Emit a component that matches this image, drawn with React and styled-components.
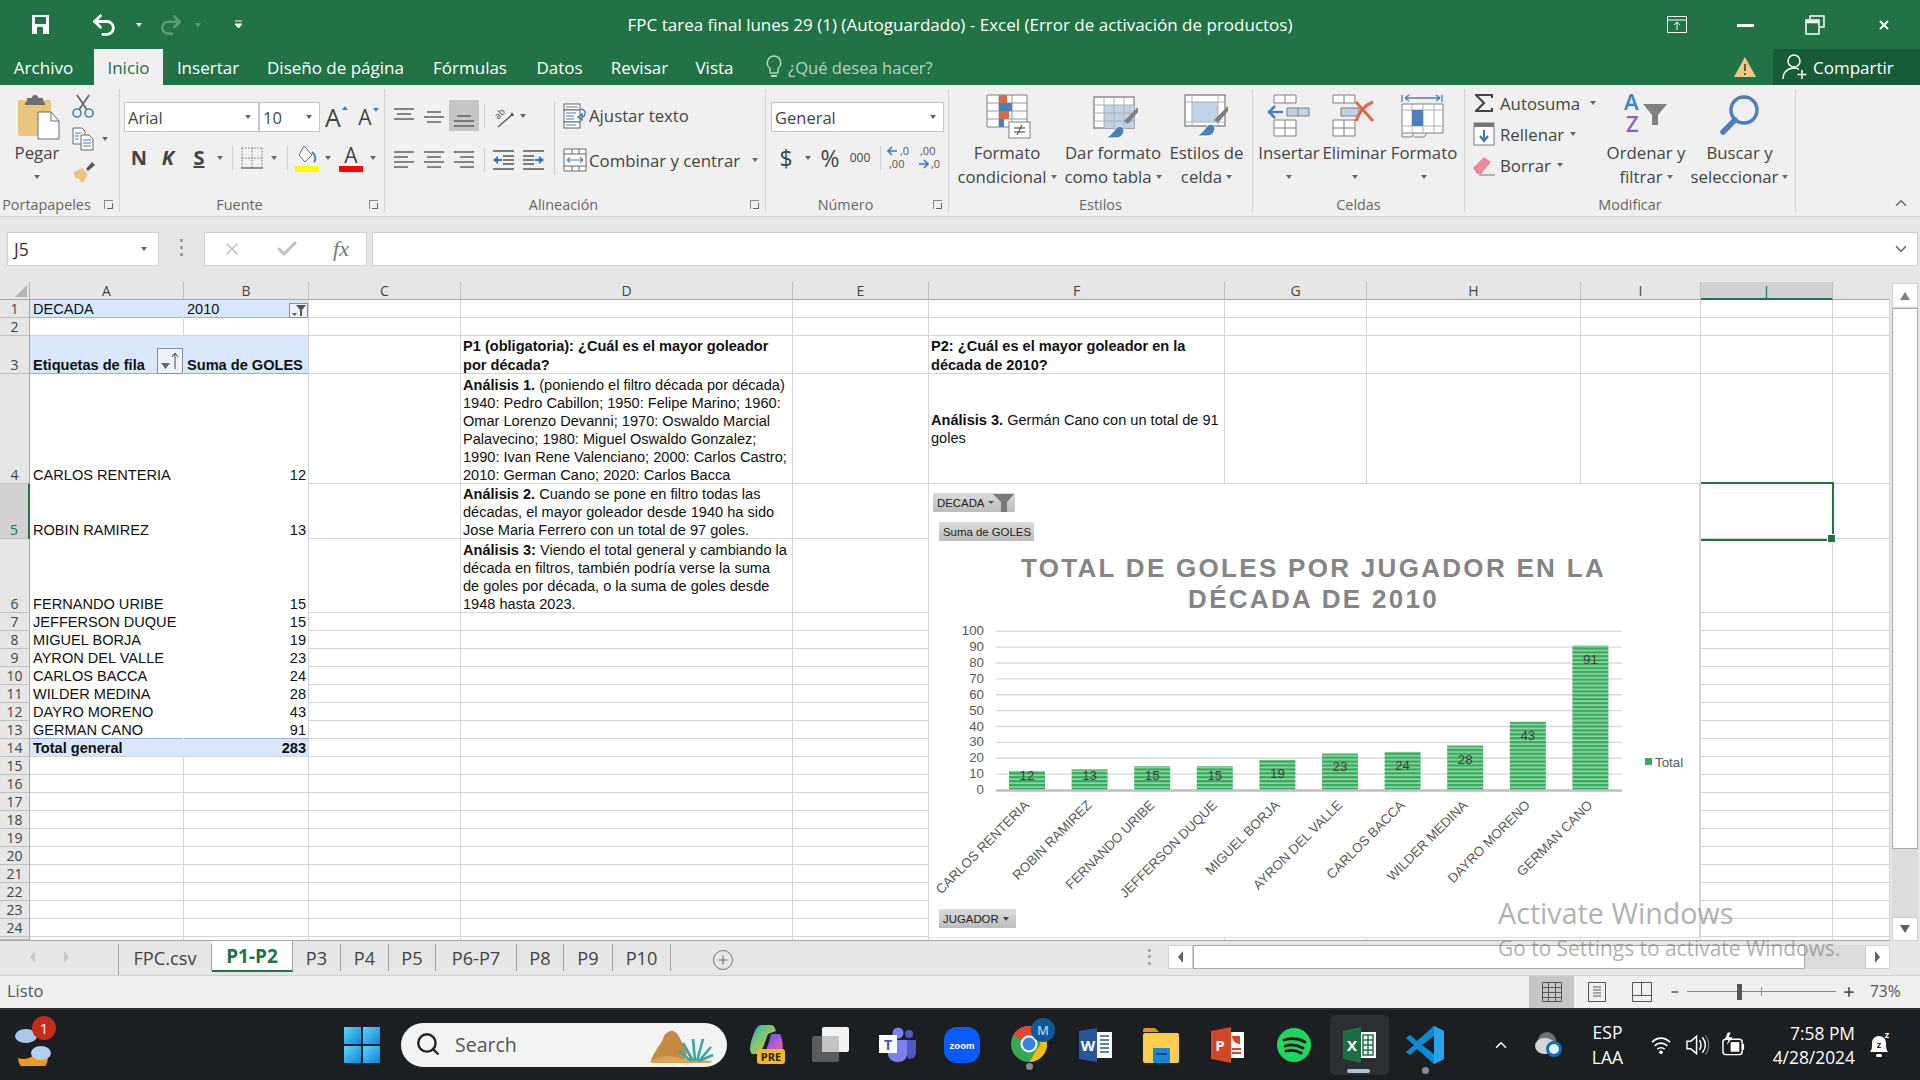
import React from 'react'
import styled, { createGlobalStyle } from 'styled-components'
import { Undo2, Redo2, Search, ChevronUp, ChevronDown, X, Check, Plus, Minus } from 'lucide-react'

const UI = `"Open Sans", "Noto Sans", sans-serif`
const ARIAL = `"Liberation Sans", Arial, sans-serif`
const GREEN = '#217346'

const GlobalStyle = createGlobalStyle`
  html, body { margin: 0; padding: 0; background: #fff; }
  * { box-sizing: border-box; }
  body { font-family: ${UI}; }
`

const Window = styled.div`
  width: 1920px;
  height: 1080px;
  position: relative;
  overflow: hidden;
  display: flex;
  flex-direction: column;
  background: #e6e6e6;
`

const Slot = styled.span`
  display: inline-flex;
  align-items: center;
  justify-content: center;
  flex: none;
  width: ${p => p.$w}px;
  margin-left: ${p => p.$ml || 0}px;
  position: relative;
`

/* title bar */
const TitleBar = styled.div`
  height: 49px;
  background: ${GREEN};
  display: grid;
  grid-template-columns: 1fr auto 1fr;
  align-items: center;
  color: #fff;
`
const Quick = styled.div`
  display: flex;
  align-items: center;
`
const WindowTitle = styled.div`
  font-size: 17px;
  color: #fff;
  white-space: nowrap;
`
const WindowButtons = styled.div`
  display: flex;
  align-items: center;
  justify-content: flex-end;
`
const TinyCaret = styled.span`
  display: inline-block;
  flex: none;
  width: 0;
  height: 0;
  border-left: ${p => p.$s || 3.5}px solid transparent;
  border-right: ${p => p.$s || 3.5}px solid transparent;
  border-top: ${p => (p.$s || 3.5) + 0.5}px solid ${p => p.$c || '#666'};
  margin-left: ${p => p.$ml || 0}px;
`

/* menu */
const MenuBar = styled.div`
  height: 36px;
  background: ${GREEN};
  display: flex;
  align-items: stretch;
`
const MenuTab = styled.div`
  width: ${p => p.$w}px;
  margin-left: ${p => p.$ml || 0}px;
  display: flex;
  align-items: center;
  justify-content: center;
  font-size: 17px;
  white-space: nowrap;
  color: ${p => (p.$active ? GREEN : '#fff')};
  background: ${p => (p.$active ? '#f0f0f0' : 'transparent')};
`
const TellMe = styled.div`
  display: flex;
  align-items: center;
  font-size: 16.6px;
  color: #b6d5c2;
  margin-left: 6px;
  white-space: nowrap;
`
const WarningSlot = styled.span`
  margin-left: auto;
  margin-right: 16px;
  display: flex;
  align-items: center;
`
const Share = styled.div`
  width: 147px;
  background: #185c37;
  color: #fff;
  font-size: 17px;
  display: flex;
  align-items: center;
  padding-left: 7px;
  gap: 3px;
`

/* ribbon */
const Ribbon = styled.div`
  height: 132px;
  background: #f0f0f0;
  border-bottom: 1px solid #d2d2d2;
  display: flex;
  padding: 4px 0 4px;
  color: #444;
  font-size: 16.8px;
`
const Group = styled.div`
  width: ${p => p.$w}px;
  flex: none;
  border-right: 1px solid #d4d4d4;
  display: flex;
  flex-direction: column;
`
const GroupBody = styled.div`
  flex: 1;
  min-height: 0;
  display: flex;
  padding-left: ${p => p.$pl || 0}px;
`
const GroupLabel = styled.div`
  height: 20px;
  line-height: 26px;
  font-size: 14.4px;
  color: #666;
  text-align: center;
  white-space: nowrap;
  position: relative;
  padding-right: ${p => p.$pr || 0}px;
`
const Launcher = styled.span`
  position: absolute;
  right: 6px;
  top: 8px;
  width: 9px;
  height: 9px;
  border-left: 1px solid #888;
  border-top: 1px solid #888;
  &::after {
    content: '';
    position: absolute;
    right: 0;
    bottom: 0;
    width: 5px;
    height: 5px;
    border-right: 1px solid #666;
    border-bottom: 1px solid #666;
  }
`
const LargeButton = styled.div`
  width: ${p => p.$w}px;
  margin-left: ${p => p.$ml || 0}px;
  flex: none;
  display: flex;
  flex-direction: column;
  align-items: center;
  padding-top: 5px;
`
const LargeIcon = styled.div`
  height: 47px;
  display: flex;
  align-items: flex-start;
  justify-content: center;
  margin-left: ${p => p.$ml || 0}px;
`
const LargeLine = styled.div`
  height: 24px;
  line-height: 24px;
  white-space: nowrap;
  display: flex;
  align-items: center;
  gap: 4px;
`
const ToolColumn = styled.div`
  display: flex;
  flex-direction: column;
  width: ${p => (p.$w ? p.$w + 'px' : 'auto')};
`
const ToolRow = styled.div`
  display: flex;
  align-items: center;
  height: ${p => p.$h || 30}px;
  margin-top: ${p => p.$mt || 0}px;
  padding-left: ${p => p.$pl || 0}px;
  white-space: nowrap;
`
const ComboBox = styled.div`
  width: ${p => p.$w}px;
  height: 30px;
  background: #fff;
  border: 1px solid #c6c6c6;
  display: flex;
  align-items: center;
  justify-content: space-between;
  padding: 0 7px 0 3px;
  font-size: 16.5px;
  margin-left: ${p => p.$ml || 0}px;
`
const Sep = styled.span`
  width: 1px;
  height: ${p => p.$h || 26}px;
  background: #cfcfcf;
  display: block;
`
const TallSep = styled.span`
  flex: none;
  width: 1px;
  height: 73px;
  margin: 13px 4px 0 5px;
  background: #cfcfcf;
`
const PressedCell = styled.span`
  width: 30px;
  height: 31px;
  flex: none;
  background: #c6c6c6;
  display: flex;
  align-items: flex-end;
  justify-content: center;
  padding-bottom: 3px;
`
const FontLetter = styled.span`
  font-size: ${p => p.$s}px;
  line-height: 1;
  color: #444;
  font-weight: ${p => (p.$b ? 700 : 400)};
  font-style: ${p => (p.$i ? 'italic' : 'normal')};
  text-decoration: ${p => (p.$u ? 'underline' : 'none')};
  position: relative;
`
const GrowMark = styled.span`
  position: absolute;
  right: -7px;
  top: 1px;
  width: 0;
  height: 0;
  border-left: 3.5px solid transparent;
  border-right: 3.5px solid transparent;
  ${p => (p.$down ? 'border-top: 4px solid #4a7fb5;' : 'border-bottom: 4px solid #4a7fb5;')}
`
const ColourLetter = styled.span`
  font-size: 21px;
  line-height: 21px;
  display: flex;
  flex-direction: column;
  align-items: center;
  width: 24px;
  color: #444;
  &::after {
    content: '';
    width: 24px;
    height: 6px;
    background: #f00;
  }
`
const SmallLabel = styled.span`
  margin-left: ${p => p.$ml || 0}px;
`
const CollapseSlot = styled.div`
  flex: 1;
  display: flex;
  align-items: flex-end;
  justify-content: flex-end;
  padding: 0 10px 0 0;
  color: #666;
`

/* formula bar */
const FormulaBar = styled.div`
  height: 65px;
  background: #e6e6e6;
  display: flex;
  align-items: flex-start;
  padding-top: 15px;
`
const NameBox = styled.div`
  margin-left: 7px;
  width: 152px;
  height: 34px;
  background: #fff;
  border: 1px solid #d0d0d0;
  display: flex;
  align-items: center;
  justify-content: space-between;
  padding: 0 11px 0 6px;
  font-size: 17.5px;
  color: #333;
`
const GripDots = styled.span`
  width: 3px;
  height: 20px;
  margin: 7px 21px 0 21px;
  background: repeating-linear-gradient(#a0a0a0 0 3px, transparent 3px 7px);
`
const FxBox = styled.div`
  width: 163px;
  height: 34px;
  background: #fff;
  border: 1px solid #d0d0d0;
  display: flex;
  align-items: center;
`
const FxText = styled.span`
  font-family: "Liberation Serif", serif;
  font-style: italic;
  font-size: 22px;
  color: #777;
`
const FormulaInput = styled.div`
  margin-left: 5px;
  flex: 1;
  margin-right: 2px;
  height: 34px;
  background: #fff;
  border: 1px solid #d0d0d0;
  display: flex;
  align-items: center;
  justify-content: flex-end;
  padding-right: 7px;
  color: #666;
`

/* sheet */
const Sheet = styled.div`
  height: 659px;
  display: flex;
  background: #e6e6e6;
`
const GridArea = styled.div`
  width: 1890px;
  height: 659px;
  position: relative;
  display: grid;
  grid-template-columns: 30px 154px 125px 152px 332px 136px 296px 142px 214px 120px 132px 1fr;
  grid-template-rows: 18px 18px 18px 38px 110px 55px 74px repeat(18, 18px) 1fr;
  background: #fff;
  border-bottom: 1px solid #a8a8a8;
`
const Corner = styled.div`
  background: #e6e6e6;
  border-right: 1px solid #b4b4b4;
  border-bottom: 1px solid #a8a8a8;
  position: relative;
  &::after {
    content: '';
    position: absolute;
    right: 2px;
    bottom: 2px;
    border-left: 12px solid transparent;
    border-bottom: 12px solid #b5b5b5;
  }
`
const ColHead = styled.div`
  background: ${p => (p.$on ? '#d2d2d2' : '#e6e6e6')};
  color: ${p => (p.$on ? GREEN : '#444')};
  border-right: 1px solid ${p => (p.$end ? 'transparent' : '#c0c0c0')};
  border-bottom: ${p => (p.$on ? `2px solid ${GREEN}` : '1px solid #a8a8a8')};
  font-size: 14px;
  line-height: 18px;
  text-align: center;
`
const RowHead = styled.div`
  background: ${p => (p.$on ? '#d2d2d2' : '#e6e6e6')};
  color: ${p => (p.$on ? GREEN : '#444')};
  border-right: ${p => (p.$on ? `2px solid ${GREEN}` : '1px solid #a8a8a8')};
  box-shadow: inset 0 -1px 0 #c0c0c0;
  font-size: 14px;
  display: flex;
  align-items: flex-end;
  justify-content: center;
  line-height: 18px;
`
const Cell = styled.div`
  position: relative;
  display: flex;
  flex-direction: column;
  justify-content: ${p => (p.$mid ? 'center' : 'flex-end')};
  align-items: ${p => (p.$right ? 'flex-end' : 'flex-start')};
  padding: 0 ${p => (p.$right ? 2 : 0)}px 0 ${p => p.$pl ?? 3}px;
  font-family: ${ARIAL};
  font-size: 14.58px;
  line-height: ${p => p.$lh || 18}px;
  font-weight: ${p => (p.$bold ? 700 : 400)};
  color: #111;
  white-space: nowrap;
  background: ${p => (p.$fill ? '#d9e7fc' : '#fff')};
  border-right: 1px solid ${p => (p.$noR ? 'transparent' : '#d4d4d4')};
  box-shadow: inset 0 -1px 0 ${p => (p.$blue ? '#8db4e8' : p.$noB ? 'transparent' : '#d4d4d4')};
`
const SelectBox = styled.span`
  position: absolute;
  inset: -2px -2px -2px 0;
  border: 2px solid ${GREEN};
  border-left: none;
  z-index: 2;
  &::after {
    content: '';
    position: absolute;
    right: -4px;
    bottom: -4px;
    width: 7px;
    height: 7px;
    background: ${GREEN};
    border: 1px solid #fff;
  }
`
const LineText = styled.div`
  transform: translateY(${p => (p.$drop ? 1 : 0)}px);
`
const Strong = styled.b`font-weight: 700;`
const PivotButton = styled.span`
  position: absolute;
  right: 0;
  bottom: 0;
  width: ${p => p.$w}px;
  height: ${p => p.$h}px;
  background: #eef3fb;
  border: 1px solid #8f8f8f;
  display: flex;
  align-items: center;
  justify-content: center;
`

const ChartFrame = styled.div`
  position: absolute;
  left: 928px;
  top: 202px;
  width: 772px;
  height: 454px;
  background: #fff;
  border-left: 1px solid #d9d9d9;
  border-right: 1px solid #d9d9d9;
  border-bottom: 1px solid #d9d9d9;
  z-index: 3;
`
const ChartDrawing = styled.svg`
  display: block;
`
const ChartPill = styled.div`
  position: absolute;
  left: ${p => p.$x}px;
  top: ${p => p.$y}px;
  width: ${p => p.$w}px;
  height: 19px;
  background: linear-gradient(#dcdcdc, #bcbcbc);
  font-family: ${ARIAL};
  font-size: 11.4px;
  color: #222;
  display: flex;
  align-items: center;
  padding-left: 4px;
  gap: 4px;
  white-space: nowrap;
`
const PillFunnel = styled.svg`
  flex: none;
  margin-left: -5px;
`
const ChartTitle = styled.div`
  position: absolute;
  left: 49px;
  right: 50px;
  top: 69px;
  text-align: center;
  font-family: ${ARIAL};
  font-weight: 700;
  font-size: 26px;
  letter-spacing: 2.3px;
  line-height: 30.5px;
  color: #858585;
`

const VScroll = styled.div`
  width: 30px;
  height: 659px;
  padding: 1px 2px 0 2px;
  display: flex;
  flex-direction: column;
`
const ScrollBtn = styled.div`
  height: ${p => p.$h}px;
  background: #fff;
  border: 1px solid #d0d0d0;
  display: flex;
  align-items: center;
  justify-content: center;
  flex: none;
`
const ScrollThumb = styled.div`
  height: 541px;
  flex: none;
  background: #fff;
  border: 1px solid #ababab;
`
const ScrollTrack = styled.div`
  flex: 1;
  background: #dcdcdc;
`
const ArrowUp = styled.span`
  border-left: 5px solid transparent;
  border-right: 5px solid transparent;
  border-bottom: 8px solid #808080;
`
const ArrowDown = styled.span`
  border-left: 5px solid transparent;
  border-right: 5px solid transparent;
  border-top: 8px solid #606060;
`
const ArrowLeft = styled.span`
  border-top: 6px solid transparent;
  border-bottom: 6px solid transparent;
  border-right: 5px solid ${p => p.$c || '#606060'};
`
const ArrowRight = styled.span`
  border-top: 6px solid transparent;
  border-bottom: 6px solid transparent;
  border-left: 5px solid ${p => p.$c || '#606060'};
`

/* sheet tabs */
const TabsBar = styled.div`
  height: 34px;
  background: #e6e6e6;
  display: flex;
  align-items: flex-start;
`
const TabNav = styled.div`
  width: 118px;
  height: 31px;
  display: flex;
  align-items: center;
  padding-left: 30px;
  gap: 29px;
`
const Tabs = styled.div`
  display: flex;
  height: 31px;
  border-left: 1px solid #a0a0a0;
  margin-top: 3px;
`
const SheetTab = styled.div`
  width: ${p => p.$w}px;
  margin-top: ${p => (p.$active ? -3 : 0)}px;
  height: ${p => (p.$active ? 31 : 27)}px;
  display: flex;
  align-items: center;
  justify-content: center;
  font-size: ${p => (p.$active ? 19 : 18.2)}px;
  font-weight: ${p => (p.$active ? 700 : 400)};
  color: ${p => (p.$active ? GREEN : '#444')};
  background: ${p => (p.$active ? '#fff' : 'transparent')};
  border-bottom: ${p => (p.$active ? `2px solid ${GREEN}` : 'none')};
  border-right: 1px solid #a0a0a0;
  white-space: nowrap;
`
const AddSheet = styled.div`
  width: 20px;
  height: 20px;
  border: 1.5px solid #777;
  border-radius: 50%;
  margin: 9px 0 0 42px;
  display: flex;
  align-items: center;
  justify-content: center;
  color: #777;
`
const HScroll = styled.div`
  position: relative;
  margin-left: auto;
  margin-right: 30px;
  margin-top: 4px;
  width: 722px;
  height: 24px;
  display: flex;
  background: #dcdcdc;
`
const HBtn = styled.div`
  width: 25px;
  flex: none;
  height: 24px;
  background: #fff;
  border: 1px solid #d0d0d0;
  display: flex;
  align-items: center;
  justify-content: center;
`
const HThumb = styled.div`
  width: 612px;
  flex: none;
  background: #fff;
  border: 1px solid #ababab;
`
const HTrack = styled.div`
  flex: 1;
`
const HGrip = styled.span`
  position: absolute;
  left: -20px;
  top: 4px;
  width: 3px;
  height: 16px;
  background: repeating-linear-gradient(#a8a8a8 0 3px, transparent 3px 6.5px);
`

/* status */
const StatusBar = styled.div`
  height: 33px;
  background: #f0f0f0;
  border-top: 1px solid #d0d0d0;
  display: flex;
  align-items: stretch;
  font-size: 16.5px;
  color: #555;
`
const Ready = styled.div`
  padding: 0 0 3px 7px;
  display: flex;
  align-items: center;
  width: 1529px;
`
const ViewBtn = styled.div`
  width: ${p => p.$w}px;
  display: flex;
  align-items: center;
  justify-content: center;
  background: ${p => (p.$on ? '#c6c6c6' : 'transparent')};
`
const ZoomTrack = styled.div`
  width: 149px;
  margin-left: 7px;
  position: relative;
  &::before {
    content: '';
    position: absolute;
    left: 0;
    right: 0;
    top: 15px;
    height: 1px;
    background: #888;
  }
`
const ZoomThumb = styled.span`
  position: absolute;
  left: 50px;
  top: 8px;
  width: 5px;
  height: 16px;
  background: #555;
`
const ZoomTick = styled.span`
  position: absolute;
  left: 74px;
  top: 11px;
  width: 1px;
  height: 9px;
  background: #888;
`
const ZoomValue = styled.div`
  display: flex;
  align-items: center;
  padding-bottom: 2px;
  margin-left: 14px;
  font-size: 15.5px;
`

/* taskbar */
const Taskbar = styled.div`
  height: 72px;
  background: #1c1f21;
  border-top: 2px solid #2e2e2e;
  display: flex;
  align-items: center;
  color: #fff;
`
const SearchBox = styled.div`
  width: 326px;
  height: 44px;
  margin-left: 21px;
  flex: none;
  background: #f3f3f3;
  border-radius: 22px;
  display: flex;
  align-items: center;
  padding: 0 0 2px 14px;
  color: #555;
  font-size: 19.5px;
  position: relative;
  gap: 14px;
`
const SearchDecor = styled.span`
  position: absolute;
  right: 10px;
  top: 6px;
`
const ActiveApp = styled.div`
  width: 59px;
  height: 60px;
  margin-left: 19px;
  flex: none;
  background: #2b2f31;
  border-radius: 5px;
  display: flex;
  align-items: center;
  justify-content: center;
  position: relative;
  &::after {
    content: '';
    position: absolute;
    left: 17px;
    bottom: 2px;
    width: 23px;
    height: 4px;
    border-radius: 2px;
    background: #a8c4d4;
  }
`
const RunDot = styled.span`
  position: absolute;
  left: ${p => p.$x}px;
  top: 41px;
  width: 7px;
  height: 7px;
  border-radius: 50%;
  background: #8a8a8a;
`
const Badge = styled.span`
  position: absolute;
  right: -4px;
  top: -8px;
  width: 24px;
  height: 24px;
  border-radius: 50%;
  background: #c42b1c;
  color: #fff;
  font-size: 15px;
  display: flex;
  align-items: center;
  justify-content: center;
`
const Lang = styled.div`
  width: 33px;
  margin-left: 28px;
  flex: none;
  text-align: center;
  font-size: 17.5px;
  line-height: 25px;
`
const Clock = styled.div`
  width: 100px;
  margin-left: 9px;
  flex: none;
  text-align: right;
  font-size: 17.4px;
  line-height: 24px;
  white-space: nowrap;
`
const ActivateNote = styled.div`
  position: absolute;
  left: 1498px;
  top: 893px;
  pointer-events: none;
  z-index: 5;
  color: rgba(125, 125, 125, 0.62);
  font-size: 28.7px;
  line-height: 40px;
  white-space: nowrap;
  small {
    display: block;
    font-size: 20.9px;
    line-height: 30px;
  }
`
const RaisedSvg = styled.svg`
  margin-top: ${p => -p.$up}px;
  flex: none;
`

/* ribbon drawings */
const LinesIcon = ({ rows, w = 22, h = 20, stroke = '#555' }) => (
  <svg width={w} height={h} viewBox={`0 0 ${w} ${h}`}>
    {rows.map(([a, b, y], i) => <line key={i} x1={a} x2={b} y1={y} y2={y} stroke={stroke} strokeWidth="1.4" />)}
  </svg>
)
const PasteIcon = () => (
  <svg width="44" height="46" viewBox="0 0 44 46">
    <rect x="1" y="6" width="33" height="36" rx="2" fill="#eac67c" />
    <path d="M10 7V4h5a3 3 0 0 1 6 0h5v3l2 2v2H8V9z" fill="#6e6e6e" />
    <path d="M21 18h13l8 9v18H21z" fill="#fff" stroke="#6a6a6a" />
    <path d="M34 18v9h8" fill="none" stroke="#6a6a6a" />
  </svg>
)
const CutIcon = () => (
  <svg width="22" height="24" viewBox="0 0 22 24">
    <path d="M5 1l10 15M17 1L7 16" stroke="#6a6a6a" strokeWidth="1.8" fill="none" />
    <circle cx="5" cy="19" r="4" fill="none" stroke="#4a7fb5" strokeWidth="1.6" />
    <circle cx="17" cy="19" r="4" fill="none" stroke="#4a7fb5" strokeWidth="1.6" />
  </svg>
)
const CopyIcon = () => (
  <svg width="22" height="24" viewBox="0 0 22 24">
    <path d="M1 1h9l3 3v13H1z" fill="#fff" stroke="#666" />
    <path d="M9 8h8l4 4v11H9z" fill="#fff" stroke="#666" />
    <path d="M3 6h6M3 9h4M3 12h4M11 13h8M11 16h8M11 19h8" stroke="#4a7fb5" />
  </svg>
)
const BrushIcon = () => (
  <svg width="24" height="24" viewBox="0 0 24 24">
    <path d="M14 9l6-7 3 3-7 6z" fill="#555" />
    <path d="M1 13l9-5 6 6-5 9-3-2-1-3-3 1z" fill="#eac67c" />
  </svg>
)
const BordersIcon = () => (
  <svg width="22" height="22" viewBox="0 0 22 22">
    <path d="M1 1h20M1 11h20M1 1v20M11 1v20M21 1v20" stroke="#777" strokeDasharray="1.5 1.5" fill="none" />
    <path d="M0 21h22" stroke="#666" strokeWidth="1.4" />
  </svg>
)
const FillIcon = () => (
  <svg width="24" height="27" viewBox="0 0 24 27">
    <path d="M9 1l8 9-7 7-6-7z" fill="#fff" stroke="#666" />
    <path d="M17 7c4 3 4 8 2 10" fill="none" stroke="#4a7fb5" strokeWidth="2" />
    <rect x="0" y="21" width="24" height="6" fill="#ff0" />
  </svg>
)
const OrientIcon = () => (
  <svg width="30" height="30" viewBox="0 0 30 30">
    <text transform="translate(9 19) rotate(-45)" fontFamily={UI} fontSize="9.5" fill="#555">ab</text>
    <path d="M9 26L24 13" stroke="#555" strokeWidth="1.3" />
    <path d="M23 11l2 4-4 0z" fill="#555" />
  </svg>
)
const WrapIcon = () => (
  <svg width="24" height="26" viewBox="0 0 24 26">
    <rect x="1" y="1" width="16" height="6" fill="#fff" stroke="#666" />
    <rect x="1" y="7" width="16" height="12" fill="#fff" stroke="#666" />
    <rect x="1" y="19" width="16" height="6" fill="#fff" stroke="#666" />
    <path d="M3 4h12M3 10h10M3 13h8M3 16h8M3 22h10" stroke="#4a7fb5" />
    <path d="M18 6c6 1 5 8 0 8M15 14l4-3v6z" stroke="#4a7fb5" strokeWidth="1.4" fill="#4a7fb5" fillOpacity="0" />
  </svg>
)
const MergeIcon = () => (
  <svg width="24" height="24" viewBox="0 0 24 24">
    <path d="M1 1h22v22H1zM1 6h22M1 18h22M9 1v5M16 1v5M9 18v5M16 18v5" fill="#fff" stroke="#666" />
    <path d="M4 12h16M4 12l3-2.5M4 12l3 2.5M20 12l-3-2.5M20 12l-3 2.5" stroke="#4a7fb5" strokeWidth="1.2" fill="none" />
  </svg>
)
const IndentIcon = ({ flip }) => (
  <svg width="22" height="22" viewBox="0 0 22 22">
    <g transform={flip ? 'translate(22 0) scale(-1 1)' : undefined}>
      <path d="M1 2h21M11 7h11M11 11h11M11 15h11M1 20h21" stroke="#555" strokeWidth="1.3" />
      <path d="M1 11l5-4v3h4v2H6v3z" fill="#3a78b8" />
    </g>
  </svg>
)
const DecimalIcon = ({ top, bottom, flip }) => (
  <svg width="30" height="28" viewBox="0 0 30 28" fontFamily={UI} fontSize="11" fill="#555">
    {flip ? (
      <>
        <text x="4" y="11">{top}</text>
        <text x="15" y="24">{bottom}</text>
        <path d="M3 20h8M8 16l4 4-4 4" stroke="#3a78b8" strokeWidth="1.6" fill="none" />
      </>
    ) : (
      <>
        <text x="15" y="11">{top}</text>
        <text x="4" y="24">{bottom}</text>
        <path d="M12 7H4M7 3L3 7l4 4" stroke="#3a78b8" strokeWidth="1.6" fill="none" />
      </>
    )}
  </svg>
)
const CondIcon = () => (
  <svg width="46" height="46" viewBox="0 0 46 46">
    <path d="M1 1h40v32H1z" fill="#fff" stroke="#7f7f7f" />
    <path d="M1 9h40M1 17h40M1 25h40M13 1v32M26 1v32" stroke="#9a9a9a" />
    <rect x="13" y="1" width="8" height="8" fill="#dd6a45" />
    <rect x="13" y="9" width="13" height="8" fill="#4c80ba" />
    <rect x="13" y="17" width="10" height="8" fill="#dd6a45" />
    <rect x="13" y="25" width="5" height="8" fill="#4c80ba" />
    <rect x="23" y="28" width="21" height="16" fill="#fff" stroke="#7f7f7f" />
    <path d="M28 34h11M28 38h11M36 31l-5 10" stroke="#333" />
  </svg>
)
const TableBrushIcon = () => (
  <svg width="46" height="46" viewBox="0 0 46 46">
    <path d="M1 3h40v31H1z" fill="#fff" stroke="#8a8a8a" strokeWidth="1.4" />
    <rect x="11" y="11" width="30" height="23" fill="#bed3e8" />
    <path d="M1 11h40M1 19h40M1 27h40M11 3v31M21 3v31M31 3v31" stroke="#b0b0b0" />
    <path d="M31 27l9-9 5-5v5l-10 12z" fill="#7f7f7f" />
    <path d="M11 44c6-1 9-6 12-10 3-3 8-2 8 2 0 5-4 8-8 8z" fill="#4c80ba" stroke="#fff" />
  </svg>
)
const CellBrushIcon = () => (
  <svg width="46" height="46" viewBox="0 0 46 46">
    <path d="M1 1h40v31H1z" fill="#fff" stroke="#8a8a8a" strokeWidth="1.4" />
    <rect x="8" y="8" width="26" height="20" fill="#bed3e8" />
    <path d="M1 8h40M8 1v31M34 1v31M1 28h40" stroke="#b0b0b0" />
    <path d="M30 26l9-9 5-5v5l-10 12z" fill="#7f7f7f" />
    <path d="M11 42c6-1 9-6 12-10 3-3 8-2 8 2 0 5-4 8-8 8z" fill="#4c80ba" stroke="#fff" />
  </svg>
)
const InsertIcon = () => (
  <svg width="46" height="46" viewBox="0 0 46 46">
    <path d="M8 1h22v8H8zM19 1v8M8 26h22v16H8zM19 26v16M8 34h22" fill="#fff" stroke="#7f7f7f" />
    <path d="M21 14h22v8H21zM32 14v8" fill="#bed3e8" stroke="#7f7f7f" />
    <path d="M17 18H3M9 12l-6 6 6 6" stroke="#4c80ba" strokeWidth="2.6" fill="none" />
  </svg>
)
const DeleteIcon = () => (
  <svg width="46" height="46" viewBox="0 0 46 46">
    <path d="M1 1h22v8H1zM12 1v8M1 26h22v16H1zM12 26v16M1 34h22" fill="#fff" stroke="#7f7f7f" />
    <path d="M9 14h18v8H9z" fill="#bed3e8" stroke="#7f7f7f" />
    <path d="M24 8l17 19M41 8c-8 3-14 10-17 19" stroke="#dd6a45" strokeWidth="3" fill="none" />
  </svg>
)
const FormatIcon = () => (
  <svg width="46" height="46" viewBox="0 0 46 46">
    <path d="M1 1v7M41 1v7M4 4h35M4 4l4-3M4 4l4 3M39 4l-4-3M39 4l-4 3" stroke="#4c80ba" strokeWidth="1.4" fill="none" />
    <path d="M1 10h41v29H1z" fill="#fff" stroke="#7f7f7f" />
    <path d="M1 16h41M1 32h41M11 10v29M22 10v29M33 10v29" stroke="#b0b0b0" />
    <rect x="11" y="16" width="11" height="16" fill="#4c80ba" />
    <path d="M1 39v4h10l2-4M13 43h10l3-4" fill="none" stroke="#7f7f7f" />
  </svg>
)
const SigmaIcon = () => (
  <svg width="18" height="18" viewBox="0 0 18 18">
    <path d="M17 4V1H1l8 8-8 8h16v-3" fill="none" stroke="#444" strokeWidth="2.2" />
  </svg>
)
const FillDownIcon = () => (
  <svg width="22" height="24" viewBox="0 0 22 24">
    <rect x="1" y="1" width="20" height="22" fill="#fff" stroke="#777" />
    <rect x="1" y="1" width="20" height="4" fill="#777" />
    <path d="M11 8v11M7 14l4 5 4-5" stroke="#3a78b8" strokeWidth="2.2" fill="none" />
  </svg>
)
const EraserIcon = () => (
  <svg width="24" height="22" viewBox="0 0 24 22">
    <path d="M1 14L12 3l7 5L9 20H5z" fill="#ea8a9c" />
    <path d="M7 21h16" stroke="#777" />
  </svg>
)
const SortIcon = () => (
  <RaisedSvg $up={10} width="46" height="56" viewBox="0 -10 46 56" fontFamily={UI} fontWeight="600" fontSize="22">
    <text x="1" y="16" fill="#3f7fbf">A</text>
    <text x="3" y="38" fill="#9063b8">Z</text>
    <path d="M20 10h24L35 21v10h-6V21z" fill="#808080" />
  </RaisedSvg>
)
const FindIcon = () => (
  <svg width="44" height="44" viewBox="0 0 44 44">
    <circle cx="26" cy="16" r="13" fill="none" stroke="#4c80ba" strokeWidth="3.5" />
    <path d="M17 26L5 38" stroke="#4c80ba" strokeWidth="5.5" strokeLinecap="round" />
  </svg>
)

/* taskbar drawings */
const WinLogo = () => (
  <svg width="36" height="36" viewBox="0 0 36 36">
    <defs>
      <linearGradient id="winG" x1="0" y1="0" x2="1" y2="1">
        <stop offset="0" stopColor="#5ed6f7" />
        <stop offset="1" stopColor="#0a84d8" />
      </linearGradient>
    </defs>
    <rect x="0" y="0" width="17" height="17" fill="url(#winG)" />
    <rect x="19" y="0" width="17" height="17" fill="url(#winG)" />
    <rect x="0" y="19" width="17" height="17" fill="url(#winG)" />
    <rect x="19" y="19" width="17" height="17" fill="url(#winG)" />
  </svg>
)
const WeatherIcon = () => (
  <svg width="40" height="42" viewBox="0 0 40 42">
    <path d="M26 24a15 15 0 0 1-20 10 15 15 0 0 0 30-1c0-3-1-7-4-10z" fill="#f39a1d" />
    <ellipse cx="14" cy="12" rx="11" ry="7" fill="#a9c8ee" />
    <ellipse cx="29" cy="29" rx="10" ry="7" fill="#b3cff0" />
  </svg>
)
const DesertIcon = () => (
  <svg width="68" height="34" viewBox="0 0 68 34">
    <path d="M2 32c2-8 8-14 12-22 1-5 6-9 10-8 5 1 8 10 12 17 3 4 2 12-4 13z" fill="#c68a45" />
    <path d="M0 33c10-6 20-8 34-3l30 2-4 2H4z" fill="#dba451" />
    <path d="M42 32L30 22M44 32L34 14M46 32l-2-22M48 32l6-22M50 32l12-14M50 32l14-6" stroke="#3aa7a5" strokeWidth="2.6" fill="none" />
  </svg>
)
const CopilotIcon = () => (
  <svg width="36" height="42" viewBox="0 0 36 42">
    <defs>
      <linearGradient id="coG" x1="0" y1="0" x2="1" y2="1">
        <stop offset="0" stopColor="#2aa4e0" />
        <stop offset=".45" stopColor="#7fc96a" />
        <stop offset="1" stopColor="#f2b33c" />
      </linearGradient>
      <linearGradient id="coP" x1="0" y1="0" x2="1" y2="1">
        <stop offset="0" stopColor="#2d5fd8" />
        <stop offset=".5" stopColor="#b65ad6" />
        <stop offset="1" stopColor="#e56a9a" />
      </linearGradient>
    </defs>
    <path d="M12 1h10c3 0 4 3 5 6l-8 3-6 16c-1 3-3 4-6 4H3c-3-3-2-8-1-12C4 12 7 1 12 1z" fill="url(#coG)" />
    <path d="M22 10h9c3 7 4 14 1 20h-8c-4 0-6-1-9-2 3-1 3-5 5-10z" fill="url(#coP)" />
    <rect x="8" y="25" width="28" height="15" rx="3" fill="#f6b91f" />
    <text x="22" y="36.5" textAnchor="middle" fontFamily={UI} fontWeight="700" fontSize="11" fill="#222">PRE</text>
  </svg>
)
const TaskViewIcon = () => (
  <svg width="40" height="36" viewBox="0 0 40 36">
    <rect x="0" y="9" width="27" height="26" rx="2" fill="#5c5c5c" />
    <rect x="10" y="0" width="27" height="25" rx="2" fill="#f2f2f2" />
    <rect x="10" y="9" width="17" height="16" fill="#c4c4c4" />
  </svg>
)
const TeamsIcon = () => (
  <svg width="38" height="36" viewBox="0 0 38 36">
    <circle cx="19" cy="6" r="5.5" fill="#7b83eb" />
    <circle cx="30" cy="7" r="4" fill="#5059c9" />
    <path d="M24 13h13v12c0 5-4 7-8 7z" fill="#5059c9" />
    <path d="M9 13h19v14c0 5-4 8-9 8s-10-3-10-8z" fill="#7b83eb" />
    <rect x="0" y="8" width="18" height="18" fill="#fff" />
    <text x="9" y="23" textAnchor="middle" fontFamily={UI} fontWeight="700" fontSize="14" fill="#4b53bc">T</text>
  </svg>
)
const ZoomIcon = () => (
  <svg width="36" height="36" viewBox="0 0 36 36">
    <rect width="36" height="36" rx="13" fill="#0b5cff" />
    <text x="18" y="21.5" textAnchor="middle" fontFamily={ARIAL} fontWeight="700" fontSize="9.5" fill="#fff">zoom</text>
  </svg>
)
const ChromeIcon = () => (
  <svg width="46" height="46" viewBox="0 4 46 46" overflow="visible">
    <circle cx="18" cy="26" r="18" fill="#34a853" />
    <path d="M18 8a18 18 0 0 1 15.6 9H18a9 9 0 0 0-8 5L2.6 17A18 18 0 0 1 18 8z" fill="#ea4335" />
    <path d="M33.6 17a18 18 0 0 1-15 27L26 31a9 9 0 0 0 0-14z" fill="#fbbc04" />
    <circle cx="18" cy="26" r="8.5" fill="#fff" />
    <circle cx="18" cy="26" r="6.5" fill="#3b82e6" />
    <circle cx="32" cy="12" r="12" fill="#0b5a9c" />
    <text x="32" y="17" textAnchor="middle" fontFamily={UI} fontWeight="600" fontSize="13" fill="#a9cbe8">M</text>
  </svg>
)
const WordIcon = () => (
  <svg width="33" height="34" viewBox="0 0 33 34">
    <path d="M0 3l18-3v34L0 31z" fill="#2b579a" />
    <rect x="18" y="4" width="15" height="26" fill="#fff" />
    <path d="M21 8h9M21 12h9M21 16h9M21 20h9M21 24h9" stroke="#2b579a" strokeWidth="1.6" />
    <text x="9" y="23" textAnchor="middle" fontFamily={UI} fontWeight="700" fontSize="15" fill="#fff">W</text>
  </svg>
)
const FolderIcon = () => (
  <svg width="36" height="36" viewBox="0 0 36 36">
    <path d="M0 3a2 2 0 0 1 2-2h10l4 4H0z" fill="#d49a14" />
    <rect x="0" y="6" width="36" height="30" rx="2" fill="#ffcc4d" />
    <rect x="10" y="21" width="17" height="15" rx="1" fill="#1787d8" />
    <rect x="13" y="26" width="11" height="2" fill="#0a4f91" />
  </svg>
)
const PptIcon = () => (
  <svg width="33" height="36" viewBox="0 0 33 36">
    <rect x="16" y="5" width="17" height="26" fill="#fff" />
    <path d="M0 4l20-4v36L0 32z" fill="#d24726" />
    <path d="M21 9h8v8a8 8 0 0 1-8-8zM21 21h9v2h-9zM21 25h9v2h-9z" fill="#d24726" />
    <text x="9" y="24" textAnchor="middle" fontFamily={UI} fontWeight="700" fontSize="15" fill="#fff">P</text>
  </svg>
)
const SpotifyIcon = () => (
  <svg width="34" height="34" viewBox="0 0 34 34">
    <circle cx="17" cy="17" r="17" fill="#1ed760" />
    <path d="M7 12c7-2 14-2 21 2M8 18c6-2 12-1 18 2M9 23c5-1 10-1 15 2" stroke="#121212" strokeWidth="2.8" strokeLinecap="round" fill="none" />
  </svg>
)
const ExcelIcon = () => (
  <svg width="33" height="36" viewBox="0 0 33 36">
    <rect x="16" y="5" width="17" height="26" fill="#fff" />
    <path d="M20 8h10v20H20zM20 13h10M20 18h10M20 23h10M25 8v20" fill="none" stroke="#217346" strokeWidth="1.5" />
    <path d="M0 4l18-4v36L0 32z" fill="#1d6f42" />
    <text x="9" y="24" textAnchor="middle" fontFamily={UI} fontWeight="700" fontSize="15" fill="#fff">X</text>
  </svg>
)
const CodeIcon = () => (
  <svg width="38" height="38" viewBox="0 0 38 38">
    <path d="M28 0l10 5v28l-10 5-17-15-7 6-4-3 8-7-8-7 4-3 7 6z" fill="#0e8ad4" />
    <path d="M28 10L16 19l12 9z" fill="#1c1f21" />
    <path d="M28 0l10 5v28l-10 5z" fill="#29a3ea" />
  </svg>
)
const CloudIcon = () => (
  <svg width="28" height="28" viewBox="0 0 28 28">
    <ellipse cx="12" cy="10" rx="9" ry="9" fill="#6f7276" />
    <ellipse cx="10" cy="15" rx="10" ry="8" fill="#d5d5d5" />
    <circle cx="19" cy="18" r="8" fill="#0a6cc4" />
    <circle cx="19" cy="18" r="5" fill="#e8f1fa" />
  </svg>
)
const WifiIcon = () => (
  <svg width="22" height="22" viewBox="0 0 22 22">
    <path d="M1 8c6-6 14-6 20 0M4 12c4-4 10-4 14 0M7 15.500c2-2 6-2 8 0" stroke="#fff" strokeWidth="1.8" fill="none" />
    <circle cx="11" cy="19" r="2" fill="#fff" />
  </svg>
)
const VolumeIcon = () => (
  <svg width="25" height="24" viewBox="0 0 25 24">
    <path d="M1 8h4l6-5v18l-6-5H1z" fill="none" stroke="#fff" strokeWidth="1.5" />
    <path d="M14 7c2 3 2 7 0 10M17 4c4 5 4 11 0 16" stroke="#fff" strokeWidth="1.5" fill="none" />
    <path d="M20 2c5 6 5 14 0 20" stroke="#777" strokeWidth="1.3" fill="none" />
  </svg>
)
const BatteryIcon = () => (
  <svg width="25" height="28" viewBox="0 0 25 28">
    <rect x="1" y="8" width="20" height="16" rx="3" fill="none" stroke="#fff" strokeWidth="1.5" />
    <rect x="9" y="11" width="9" height="10" fill="#fff" />
    <path d="M22 13v6" stroke="#fff" strokeWidth="2" />
    <path d="M6 1L3 8h4l-2 6 6-8H7l2-5z" fill="#fff" />
  </svg>
)
const BellIcon = () => (
  <svg width="24" height="30" viewBox="0 0 24 30">
    <path d="M3 22c2-2 2-5 2-9 0-4 3-7 7-7s7 3 7 7c0 4 0 7 2 9z" fill="#fff" />
    <rect x="9" y="24" width="6" height="3" rx="1.5" fill="#fff" />
    <text x="12" y="18" textAnchor="middle" fontFamily={UI} fontWeight="700" fontSize="9" fill="#1c1f21">z</text>
    <text x="20" y="8" textAnchor="middle" fontFamily={UI} fontWeight="700" fontSize="9" fill="#fff">z</text>
  </svg>
)

/* sheet data */
const colNames = ['A', 'B', 'C', 'D', 'E', 'F', 'G', 'H', 'I', 'J', '']
const players = [
  ['CARLOS RENTERIA', 12], ['ROBIN RAMIREZ', 13], ['FERNANDO URIBE', 15], ['JEFFERSON DUQUE', 15], ['MIGUEL BORJA', 19],
  ['AYRON DEL VALLE', 23], ['CARLOS BACCA', 24], ['WILDER MEDINA', 28], ['DAYRO MORENO', 43], ['GERMAN CANO', 91],
]

const wrapped = {
  3: {
    D: { lh: 19, bold: true, drop: true, lines: ['P1 (obligatoria): ¿Cuál es el mayor goleador', 'por década?'] },
    F: { lh: 19, bold: true, drop: true, lines: ['P2: ¿Cuál es el mayor goleador en la', 'década de 2010?'] },
  },
  4: {
    D: {
      lines: [
        <><Strong>Análisis 1.</Strong> (poniendo el filtro década por década)</>,
        '1940: Pedro Cabillon; 1950: Felipe Marino; 1960:',
        'Omar Lorenzo Devanni; 1970: Oswaldo Marcial',
        'Palavecino; 1980: Miguel Oswaldo Gonzalez;',
        '1990: Ivan Rene Valenciano; 2000: Carlos Castro;',
        '2010: German Cano; 2020: Carlos Bacca',
      ],
    },
    F: { mid: true, lines: [<><Strong>Análisis 3.</Strong> Germán Cano con un total de 91</>, 'goles'] },
  },
  5: {
    D: {
      lines: [
        <><Strong>Análisis 2.</Strong> Cuando se pone en filtro todas las</>,
        'décadas, el mayor goleador desde 1940 ha sido',
        'Jose Maria Ferrero con un total de 97 goles.',
      ],
    },
  },
  6: {
    D: {
      lines: [
        <><Strong>Análisis 3:</Strong> Viendo el total general y cambiando la</>,
        'década en filtros, también podría verse la suma',
        'de goles por década, o la suma de goles desde',
        '1948 hasta 2023.',
      ],
    },
  },
}

const SortButton = () => (
  <PivotButton $w={26} $h={26}>
    <svg width="22" height="22" viewBox="0 0 22 22">
      <path d="M2 13h9l-4.500 6z" fill="#666" />
      <path d="M16 19V4M13 7l3-4 3 4" stroke="#444" fill="none" />
    </svg>
  </PivotButton>
)
const FilterButton = () => (
  <PivotButton $w={19} $h={15}>
    <svg width="16" height="13" viewBox="0 0 16 13">
      <path d="M5 1h10l-4 5v6H9V6z" fill="#555" />
      <path d="M1 9h5l-2.500 3z" fill="#555" />
    </svg>
  </PivotButton>
)

const renderCell = (row, col) => {
  const key = `${row}${col}`
  const isPivotCol = col === 'A' || col === 'B'
  if (row === 1 && isPivotCol) {
    return (
      <Cell key={key} $fill $noR={col === 'A'} $blue>
        {col === 'A' ? 'DECADA' : '2010'}
        {col === 'B' && <FilterButton />}
      </Cell>
    )
  }
  if (row === 3 && isPivotCol) {
    return (
      <Cell key={key} $fill $bold $noR={col === 'A'} $blue>
        {col === 'A' ? 'Etiquetas de fila' : 'Suma de GOLES'}
        {col === 'A' && <SortButton />}
      </Cell>
    )
  }
  if (row >= 4 && row <= 13 && isPivotCol) {
    const p = players[row - 4]
    return (
      <Cell key={key} $noR={col === 'A'} $noB={row < 13} $right={col === 'B'} $blue={row === 13}>
        {col === 'A' ? p[0] : p[1]}
      </Cell>
    )
  }
  if (row === 14 && isPivotCol) {
    return (
      <Cell key={key} $fill $bold $noR={col === 'A'} $right={col === 'B'}>
        {col === 'A' ? 'Total general' : 283}
      </Cell>
    )
  }
  const w = wrapped[row] && wrapped[row][col]
  if (w) {
    return (
      <Cell key={key} $bold={w.bold} $lh={w.lh} $mid={w.mid} $pl={2}>
        {w.lines.map((l, i) => <LineText key={i} $drop={w.drop}>{l}</LineText>)}
      </Cell>
    )
  }
  return (
    <Cell key={key}>
      {row === 5 && col === 'J' && <SelectBox />}
    </Cell>
  )
}

const barX = i => 1026 + i * 62.6
const barTop = v => 790 - v * 1.587

const GoalsChart = () => (
  <ChartDrawing width="772" height="454" viewBox="928 484 772 454" fontFamily={ARIAL}>
    <defs>
      <pattern id="stripes" width="4" height="3.900" patternUnits="userSpaceOnUse">
        <rect width="4" height="3.900" fill="#37aa5c" />
        <rect y="2.300" width="4" height="1.600" fill="#92d6a6" />
      </pattern>
    </defs>
    {Array.from({ length: 11 }, (_, i) => {
      const y = 790 - i * 15.87
      return (
        <g key={i}>
          {i > 0 && <line x1="995" x2="1621" y1={y} y2={y} stroke="#d9d9d9" strokeWidth="1.4" />}
          <text x="983" y={y + 4} textAnchor="end" fontSize="13.3" fill="#595959">{i * 10}</text>
        </g>
      )
    })}
    {players.map(([name, v], i) => (
      <g key={name}>
        <rect x={barX(i) - 18} y={barTop(v)} width="36" height={790 - barTop(v)} fill="url(#stripes)" />
        <text x={barX(i)} y={Math.min(barTop(v) + 13, 775) + 5} textAnchor="middle" fontSize="13.3" fill="#404040">{v}</text>
        <text transform={`translate(${barX(i) + 3} 806) rotate(-45)`} textAnchor="end" fontSize="13.3" fill="#595959">{name}</text>
      </g>
    ))}
    <line x1="995" x2="1621" y1="790.500" y2="790.500" stroke="#bfbfbf" strokeWidth="2.5" />
    <rect x="1644" y="758" width="7" height="7" fill="#37aa5c" />
    <text x="1654" y="767" fontSize="13.3" fill="#595959">Total</text>
  </ChartDrawing>
)

const sheetTabs = [
  ['FPC.csv', 93], ['P1-P2', 81, true], ['P3', 48], ['P4', 48], ['P5', 47], ['P6-P7', 81], ['P8', 47], ['P9', 49], ['P10', 58],
]
const rowCount = 24

export default function App() {
  return (
    <Window>
      <GlobalStyle />
      <TitleBar>
        <Quick>
          <Slot $w={20} $ml={30}>
            <svg width="19" height="19" viewBox="0 0 19 19">
              <path d="M1 0h17v19H1z" fill="#fff" />
              <rect x="4" y="2" width="11" height="7" fill={GREEN} />
              <rect x="6" y="12" width="6" height="7" fill={GREEN} />
            </svg>
          </Slot>
          <Slot $w={28} $ml={40}><Undo2 size={28} color="#fff" strokeWidth={2.4} /></Slot>
          <Slot $w={8} $ml={17}><TinyCaret $c="#fff" /></Slot>
          <Slot $w={26} $ml={15}><Redo2 size={26} color="#5d9c7a" strokeWidth={2.4} /></Slot>
          <Slot $w={8} $ml={10}><TinyCaret $c="#5d9c7a" /></Slot>
          <Slot $w={10} $ml={31}>
            <svg width="9" height="9" viewBox="0 0 9 9"><path d="M1 1h7M1 4h7l-3.500 4z" stroke="#fff" fill="#fff" strokeWidth="1" /></svg>
          </Slot>
        </Quick>
        <WindowTitle>FPC tarea final lunes 29 (1) (Autoguardado) - Excel (Error de activación de productos)</WindowTitle>
        <WindowButtons>
          <Slot $w={20}>
            <svg width="20" height="17" viewBox="0 0 20 17">
              <path d="M.500.500h19v16H.500zM.500 4h19" fill="none" stroke="#fff" />
              <path d="M10 14V6M7 9l3-3 3 3" fill="none" stroke="#fff" />
            </svg>
          </Slot>
          <Slot $w={17} $ml={50}><svg width="17" height="4"><rect width="17" height="3" y="1" fill="#fff" /></svg></Slot>
          <Slot $w={20} $ml={51}>
            <svg width="20" height="20" viewBox="0 0 20 20">
              <path d="M5 4V1h14v11h-4" fill="none" stroke="#fff" strokeWidth="1.500" />
              <rect x="1" y="5" width="13" height="14" fill="none" stroke="#fff" strokeWidth="1.500" />
              <path d="M1 7h13" stroke="#fff" strokeWidth="2.500" />
            </svg>
          </Slot>
          <Slot $w={14} $ml={52}><X size={22} color="#fff" strokeWidth={3.2} /></Slot>
          <Slot $w={29} />
        </WindowButtons>
      </TitleBar>

      <MenuBar>
        <MenuTab $w={87}>Archivo</MenuTab>
        <MenuTab $w={69} $ml={7} $active>Inicio</MenuTab>
        <MenuTab $w={90}>Insertar</MenuTab>
        <MenuTab $w={165}>Diseño de página</MenuTab>
        <MenuTab $w={104}>Fórmulas</MenuTab>
        <MenuTab $w={75}>Datos</MenuTab>
        <MenuTab $w={85}>Revisar</MenuTab>
        <MenuTab $w={65}>Vista</MenuTab>
        <Slot $w={17} $ml={18}>
          <svg width="16" height="24" viewBox="0 0 16 24">
            <path d="M8 1a7 7 0 0 0-4 12.500V18h8v-4.500A7 7 0 0 0 8 1z" fill="none" stroke="#b6d5c2" strokeWidth="1.500" />
            <path d="M5 21h6" stroke="#b6d5c2" strokeWidth="2" />
          </svg>
        </Slot>
        <TellMe>¿Qué desea hacer?</TellMe>
        <WarningSlot>
          <svg width="24" height="22" viewBox="0 0 24 22">
            <path d="M12 1l11 20H1z" fill="#efc98a" />
            <path d="M12 8v7M12 17v2" stroke="#6a4a20" strokeWidth="1.800" />
          </svg>
        </WarningSlot>
        <Share>
          <svg width="30" height="28" viewBox="0 0 30 28">
            <circle cx="14" cy="8" r="6" fill="none" stroke="#fff" strokeWidth="1.500" />
            <path d="M3 26c0-7 5-11 11-11 2 0 4 .5 5 1.500M22 17v9M17.500 21.500h9" fill="none" stroke="#fff" strokeWidth="1.500" />
          </svg>
          Compartir
        </Share>
      </MenuBar>

      <Ribbon>
        <Group $w={120}>
          <GroupBody>
            <LargeButton $w={70} $ml={2}>
              <LargeIcon $ml={3}><PasteIcon /></LargeIcon>
              <LargeLine>Pegar</LargeLine>
              <LargeLine><TinyCaret /></LargeLine>
            </LargeButton>
            <ToolColumn>
              <ToolRow $h={24} $mt={5}><CutIcon /></ToolRow>
              <ToolRow $h={24} $mt={9}><CopyIcon /><TinyCaret $ml={8} /></ToolRow>
              <ToolRow $h={24} $mt={9}><BrushIcon /></ToolRow>
            </ToolColumn>
          </GroupBody>
          <GroupLabel $pr={26}>Portapapeles<Launcher /></GroupLabel>
        </Group>

        <Group $w={265}>
          <GroupBody $pl={4}>
            <ToolColumn>
              <ToolRow $mt={13}>
                <ComboBox $w={135}>Arial<TinyCaret /></ComboBox>
                <ComboBox $w={61}>10<TinyCaret /></ComboBox>
                <Slot $w={26}><FontLetter $s={25}>A<GrowMark /></FontLetter></Slot>
                <Slot $w={38}><FontLetter $s={21}>A<GrowMark $down /></FontLetter></Slot>
              </ToolRow>
              <ToolRow $mt={11}>
                <Slot $w={30}><FontLetter $s={20} $b>N</FontLetter></Slot>
                <Slot $w={28}><FontLetter $s={20} $b $i>K</FontLetter></Slot>
                <Slot $w={34}><FontLetter $s={20} $b $u>S</FontLetter></Slot>
                <Slot $w={8}><TinyCaret /></Slot>
                <Slot $w={16}><Sep $h={24} /></Slot>
                <Slot $w={24}><BordersIcon /></Slot>
                <Slot $w={20}><TinyCaret /></Slot>
                <Slot $w={6}><Sep $h={24} /></Slot>
                <Slot $w={34}><FillIcon /></Slot>
                <Slot $w={8}><TinyCaret /></Slot>
                <Slot $w={38}><ColourLetter>A</ColourLetter></Slot>
                <Slot $w={6}><TinyCaret /></Slot>
              </ToolRow>
            </ToolColumn>
          </GroupBody>
          <GroupLabel $pr={25}>Fuente<Launcher /></GroupLabel>
        </Group>

        <Group $w={381}>
          <GroupBody>
            <ToolColumn $w={164}>
              <ToolRow $mt={11} $h={31}>
                <Slot $w={38}><LinesIcon rows={[[1, 21, 3], [4, 18, 8], [1, 21, 13]]} /></Slot>
                <Slot $w={22}><LinesIcon rows={[[4, 18, 6], [1, 21, 11], [4, 18, 16]]} /></Slot>
                <Slot $w={4} />
                <PressedCell><LinesIcon rows={[[4, 18, 8], [1, 21, 13], [1, 21, 18]]} /></PressedCell>
                <Slot $w={10}><Sep $h={24} /></Slot>
                <Slot $w={30}><OrientIcon /></Slot>
                <Slot $w={8}><TinyCaret /></Slot>
              </ToolRow>
              <ToolRow $mt={14}>
                <Slot $w={38}><LinesIcon rows={[[1, 21, 2], [1, 15, 7], [1, 21, 12], [1, 15, 17]]} /></Slot>
                <Slot $w={22}><LinesIcon rows={[[1, 21, 2], [4, 18, 7], [1, 21, 12], [4, 18, 17]]} /></Slot>
                <Slot $w={38}><LinesIcon rows={[[1, 21, 2], [7, 21, 7], [1, 21, 12], [7, 21, 17]]} /></Slot>
                <Slot $w={2}><Sep $h={24} /></Slot>
                <Slot $w={36}><IndentIcon /></Slot>
                <Slot $w={26}><IndentIcon flip /></Slot>
              </ToolRow>
            </ToolColumn>
            <TallSep />
            <ToolColumn>
              <ToolRow $mt={10} $h={33} $pl={4}><WrapIcon /><SmallLabel $ml={2}>Ajustar texto</SmallLabel></ToolRow>
              <ToolRow $mt={13} $pl={4}><MergeIcon /><SmallLabel $ml={2}>Combinar y centrar</SmallLabel><TinyCaret $ml={12} /></ToolRow>
            </ToolColumn>
          </GroupBody>
          <GroupLabel $pr={23}>Alineación<Launcher /></GroupLabel>
        </Group>

        <Group $w={183}>
          <GroupBody>
            <ToolColumn>
              <ToolRow $mt={13}>
                <ComboBox $w={173} $ml={5}>General<TinyCaret /></ComboBox>
              </ToolRow>
              <ToolRow $mt={11} $pl={5}>
                <Slot $w={30}><FontLetter $s={23}>$</FontLetter></Slot>
                <Slot $w={14}><TinyCaret /></Slot>
                <Slot $w={30}><FontLetter $s={23}>%</FontLetter></Slot>
                <Slot $w={30}><FontLetter $s={12}>000</FontLetter></Slot>
                <Slot $w={10}><Sep $h={24} /></Slot>
                <Slot $w={30}><DecimalIcon top=",0" bottom=",00" /></Slot>
                <Slot $w={32}><DecimalIcon top=",00" bottom=",0" flip /></Slot>
              </ToolRow>
            </ToolColumn>
          </GroupBody>
          <GroupLabel $pr={23}>Número<Launcher /></GroupLabel>
        </Group>

        <Group $w={304}>
          <GroupBody>
            <LargeButton $w={116}>
              <LargeIcon $ml={4}><CondIcon /></LargeIcon>
              <LargeLine>Formato</LargeLine>
              <LargeLine>condicional<TinyCaret /></LargeLine>
            </LargeButton>
            <LargeButton $w={96}>
              <LargeIcon $ml={6}><TableBrushIcon /></LargeIcon>
              <LargeLine>Dar formato</LargeLine>
              <LargeLine>como tabla<TinyCaret /></LargeLine>
            </LargeButton>
            <LargeButton $w={91}>
              <LargeIcon><CellBrushIcon /></LargeIcon>
              <LargeLine>Estilos de</LargeLine>
              <LargeLine>celda<TinyCaret /></LargeLine>
            </LargeButton>
          </GroupBody>
          <GroupLabel>Estilos</GroupLabel>
        </Group>

        <Group $w={212}>
          <GroupBody>
            <LargeButton $w={72}>
              <LargeIcon><InsertIcon /></LargeIcon>
              <LargeLine>Insertar</LargeLine>
              <LargeLine><TinyCaret /></LargeLine>
            </LargeButton>
            <LargeButton $w={59}>
              <LargeIcon><DeleteIcon /></LargeIcon>
              <LargeLine>Eliminar</LargeLine>
              <LargeLine><TinyCaret /></LargeLine>
            </LargeButton>
            <LargeButton $w={80}>
              <LargeIcon><FormatIcon /></LargeIcon>
              <LargeLine>Formato</LargeLine>
              <LargeLine><TinyCaret /></LargeLine>
            </LargeButton>
          </GroupBody>
          <GroupLabel>Celdas</GroupLabel>
        </Group>

        <Group $w={331}>
          <GroupBody>
            <ToolColumn $w={138}>
              <ToolRow $h={28} $pl={10}><Slot $w={18}><SigmaIcon /></Slot><SmallLabel $ml={7}>Autosuma</SmallLabel><TinyCaret $ml={10} /></ToolRow>
              <ToolRow $h={28} $mt={3} $pl={7}><Slot $w={24}><FillDownIcon /></Slot><SmallLabel $ml={4}>Rellenar</SmallLabel><TinyCaret $ml={6} /></ToolRow>
              <ToolRow $h={28} $mt={3} $pl={7}><Slot $w={24}><EraserIcon /></Slot><SmallLabel $ml={4}>Borrar</SmallLabel><TinyCaret $ml={6} /></ToolRow>
            </ToolColumn>
            <LargeButton $w={86}>
              <LargeIcon><SortIcon /></LargeIcon>
              <LargeLine>Ordenar y</LargeLine>
              <LargeLine>filtrar<TinyCaret /></LargeLine>
            </LargeButton>
            <LargeButton $w={101}>
              <LargeIcon><FindIcon /></LargeIcon>
              <LargeLine>Buscar y</LargeLine>
              <LargeLine>seleccionar<TinyCaret /></LargeLine>
            </LargeButton>
          </GroupBody>
          <GroupLabel>Modificar</GroupLabel>
        </Group>

        <CollapseSlot><ChevronUp size={18} strokeWidth={2} /></CollapseSlot>
      </Ribbon>

      <FormulaBar>
        <NameBox>J5<TinyCaret /></NameBox>
        <GripDots />
        <FxBox>
          <Slot $w={20} $ml={17}><X size={22} color="#c0c0c0" strokeWidth={2} /></Slot>
          <Slot $w={24} $ml={33}><Check size={24} color="#c0c0c0" strokeWidth={3} /></Slot>
          <Slot $w={24} $ml={30}><FxText>fx</FxText></Slot>
        </FxBox>
        <FormulaInput><ChevronDown size={18} strokeWidth={2.2} /></FormulaInput>
      </FormulaBar>

      <Sheet>
        <GridArea>
          <Corner />
          {colNames.map(c => <ColHead key={c || 'end'} $on={c === 'J'} $end={c === ''}>{c}</ColHead>)}
          {Array.from({ length: rowCount }, (_, i) => i + 1).map(row => (
            <React.Fragment key={row}>
              <RowHead $on={row === 5}>{row}</RowHead>
              {colNames.map(c => renderCell(row, c || 'K'))}
            </React.Fragment>
          ))}
          <RowHead />
          {colNames.map(c => <Cell key={`end${c}`} $noB />)}
          <ChartFrame>
            <GoalsChart />
            <ChartPill $x={4} $y={9} $w={82}>
              DECADA
              <TinyCaret $s={3} $c="#555" />
              <PillFunnel width="21" height="18" viewBox="0 0 21 18"><path d="M0 0h21l-7 8v10H8V8z" fill="#7a7a7a" /></PillFunnel>
            </ChartPill>
            <ChartPill $x={10} $y={38} $w={95}>Suma de GOLES</ChartPill>
            <ChartTitle>TOTAL DE GOLES POR JUGADOR EN LA<br />DÉCADA DE 2010</ChartTitle>
            <ChartPill $x={10} $y={425} $w={77}>JUGADOR<TinyCaret $s={3.5} $c="#444" /></ChartPill>
          </ChartFrame>
        </GridArea>
        <VScroll>
          <ScrollBtn $h={25}><ArrowUp /></ScrollBtn>
          <ScrollThumb />
          <ScrollTrack />
          <ScrollBtn $h={24}><ArrowDown /></ScrollBtn>
        </VScroll>
      </Sheet>

      <TabsBar>
        <TabNav><ArrowLeft $c="#c8c8c8" /><ArrowRight $c="#c8c8c8" /></TabNav>
        <Tabs>
          {sheetTabs.map(([name, w, active]) => <SheetTab key={name} $w={w} $active={active}>{name}</SheetTab>)}
        </Tabs>
        <AddSheet><Plus size={14} strokeWidth={2} /></AddSheet>
        <HScroll>
          <HGrip />
          <HBtn><ArrowLeft /></HBtn>
          <HThumb />
          <HTrack />
          <HBtn><ArrowRight /></HBtn>
        </HScroll>
      </TabsBar>

      <StatusBar>
        <Ready>Listo</Ready>
        <ViewBtn $w={45} $on>
          <svg width="20" height="20" viewBox="0 0 20 20"><path d="M.500.500h19v19H.500zM.500 5.500h19M.500 10.500h19M.500 15.500h19M6.500.500v19M13.500.500v19" fill="none" stroke="#555" /></svg>
        </ViewBtn>
        <ViewBtn $w={45}>
          <svg width="20" height="20" viewBox="0 0 20 20"><path d="M1.500.500h17v19h-17zM6 5h8M6 8h8M6 11h8M6 14h8" fill="none" stroke="#555" /></svg>
        </ViewBtn>
        <ViewBtn $w={45}>
          <svg width="20" height="20" viewBox="0 0 20 20"><path d="M.500.500h19v19H.500zM.500 13.500h19M9.500.500v13" fill="none" stroke="#555" /></svg>
        </ViewBtn>
        <Slot $w={10} $ml={6}><Minus size={14} color="#555" strokeWidth={3.500} /></Slot>
        <ZoomTrack><ZoomThumb /><ZoomTick /></ZoomTrack>
        <Slot $w={14} $ml={6}><Plus size={18} color="#555" strokeWidth={3} /></Slot>
        <ZoomValue>73%</ZoomValue>
      </StatusBar>

      <Taskbar>
        <Slot $w={40} $ml={12}><WeatherIcon /><Badge>1</Badge></Slot>
        <Slot $w={36} $ml={292}><WinLogo /></Slot>
        <SearchBox>
          <Search size={26} color="#222" strokeWidth={2.200} />
          Search
          <SearchDecor><DesertIcon /></SearchDecor>
        </SearchBox>
        <Slot $w={36} $ml={22}><CopilotIcon /></Slot>
        <Slot $w={42} $ml={26}><TaskViewIcon /></Slot>
        <Slot $w={38} $ml={26}><TeamsIcon /></Slot>
        <Slot $w={36} $ml={27}><ZoomIcon /></Slot>
        <Slot $w={46} $ml={31}><ChromeIcon /><RunDot $x={15} /></Slot>
        <Slot $w={33} $ml={22}><WordIcon /></Slot>
        <Slot $w={36} $ml={31}><FolderIcon /></Slot>
        <Slot $w={33} $ml={32}><PptIcon /></Slot>
        <Slot $w={35} $ml={32}><SpotifyIcon /></Slot>
        <ActiveApp><ExcelIcon /></ActiveApp>
        <Slot $w={38} $ml={17}><CodeIcon /><RunDot $x={16} /></Slot>
        <Slot $w={18} $ml={48}><ChevronUp size={22} color="#fff" strokeWidth={2} /></Slot>
        <Slot $w={28} $ml={25}><CloudIcon /></Slot>
        <Lang>ESP<br />LAA</Lang>
        <Slot $w={20} $ml={27}><WifiIcon /></Slot>
        <Slot $w={24} $ml={15}><VolumeIcon /></Slot>
        <Slot $w={24} $ml={12}><BatteryIcon /></Slot>
        <Clock>7:58 PM<br />4/28/2024</Clock>
        <Slot $w={24} $ml={12}><BellIcon /></Slot>
      </Taskbar>

      <ActivateNote>Activate Windows<small>Go to Settings to activate Windows.</small></ActivateNote>
    </Window>
  )
}
